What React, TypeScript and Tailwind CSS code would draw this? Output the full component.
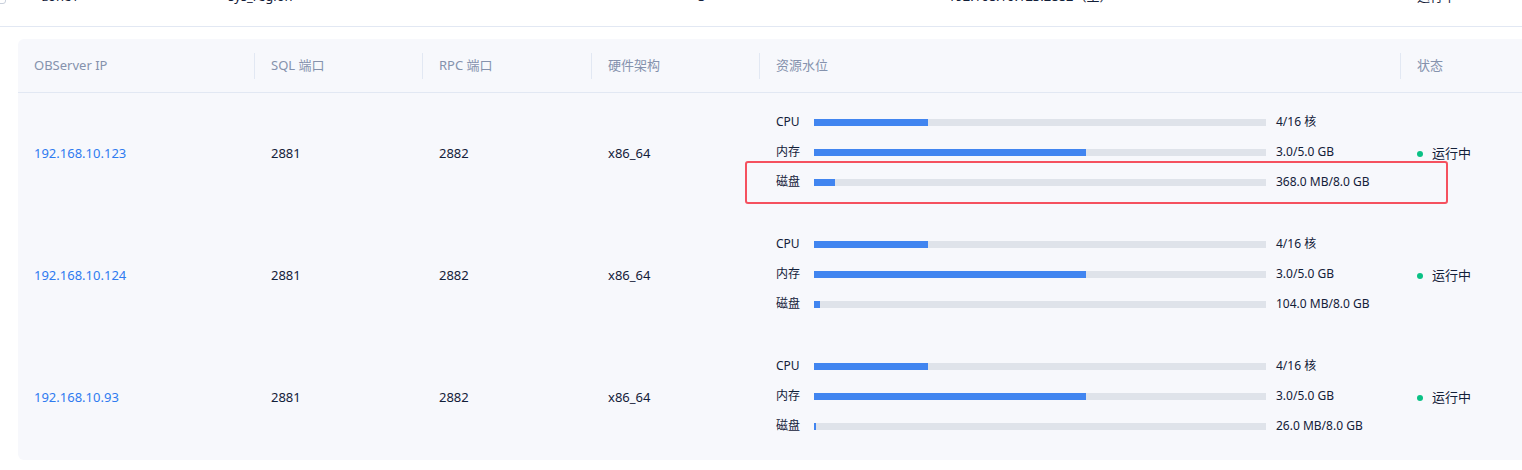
import React from "react";

const rows = [
  { ip: "192.168.10.123", disk: "368.0 MB/8.0 GB", dp: 21, box: true },
  { ip: "192.168.10.124", disk: "104.0 MB/8.0 GB", dp: 6, box: false },
  { ip: "192.168.10.93", disk: "26.0 MB/8.0 GB", dp: 2, box: false },
];

function Bar({ label, w, value }: { label: string; w: number; value: string }) {
  return (
    <div className="flex items-center h-[30px] text-[12px] text-[#132039]">
      <div className="w-[38px] shrink-0">{label}</div>
      <div className="w-[452px] shrink-0 h-[7px] bg-[#dfe3ea]">
        <div className="h-full bg-[#4185f0]" style={{ width: w }} />
      </div>
      <div className="ml-[10px]">{value}</div>
    </div>
  );
}

export default function App() {
  return (
    <div className="w-[1522px] h-[470px] overflow-hidden bg-white text-[13px] text-[#132039]" style={{ fontFamily: '"Noto Sans", "Noto Sans CJK SC", sans-serif' }}>
      <div className="h-[27px] border-b border-[#e2e8f3] relative overflow-hidden">
        <div className="absolute top-[-13px] left-0 flex items-center text-[13px]">
          <div className="w-[10px] h-[14px] border border-[#c9d0dc] rounded-[3px] ml-[-4px]" />
          <span className="ml-[36px] w-[186px] shrink-0">zone1</span>
          <span className="w-[236px] shrink-0">sys_region</span>
          <span className="w-[234px] shrink-0">-</span>
          <span className="w-[250px] shrink-0">3</span>
          <span className="w-[455px] shrink-0">192.168.10.123:2882（主）</span>
          <span className="flex items-center gap-[8px]"><span className="w-[6px] h-[6px] rounded-full bg-[#0ac185]" />运行中</span>
        </div>
      </div>
      <div className="ml-[18px] mt-[12px] w-[1520px] bg-[#f7f8fc] rounded-[6px] h-[421px]">
        <div className="flex h-[54px] items-center border-b border-[#e2e8f3] text-[#8592ad]">
          {[["OBServer IP", 236], ["SQL 端口", 168], ["RPC 端口", 169], ["硬件架构", 168], ["资源水位", 641], ["状态", 120]].map(([t, w], i) => (
            <div key={i} className="flex items-center h-[26px] shrink-0" style={{ width: w as number }}>
              {i > 0 && <div className="w-px h-[26px] bg-[#e2e8f3]" />}
              <span className="ml-[16px]">{t}</span>
            </div>
          ))}
        </div>
        {rows.map((r, i) => (
          <div key={i} className="flex items-center h-[122px]">
            <div className="w-[236px] shrink-0 pl-[16px] text-[#2f7bf0]">{r.ip}</div>
            <div className="w-[168px] shrink-0 pl-[17px]">2881</div>
            <div className="w-[169px] shrink-0 pl-[17px]">2882</div>
            <div className="w-[168px] shrink-0 pl-[17px]">x86_64</div>
            <div className="w-[641px] shrink-0 pl-[17px] relative -mt-[4px]">
              <Bar label="CPU" w={114} value="4/16 核" />
              <Bar label="内存" w={272} value="3.0/5.0 GB" />
              <Bar label="磁盘" w={r.dp} value={r.disk} />
              {r.box && <div className="absolute left-[-14px] top-[54px] w-[703px] h-[43px] border-2 border-[#f5515f] rounded-[3px]" />}
            </div>
            <div className="pl-[17px] flex items-center gap-[9px]">
              <span className="w-[6px] h-[6px] rounded-full bg-[#0ac185]" />运行中
            </div>
          </div>
        ))}
      </div>
    </div>
  );
}
